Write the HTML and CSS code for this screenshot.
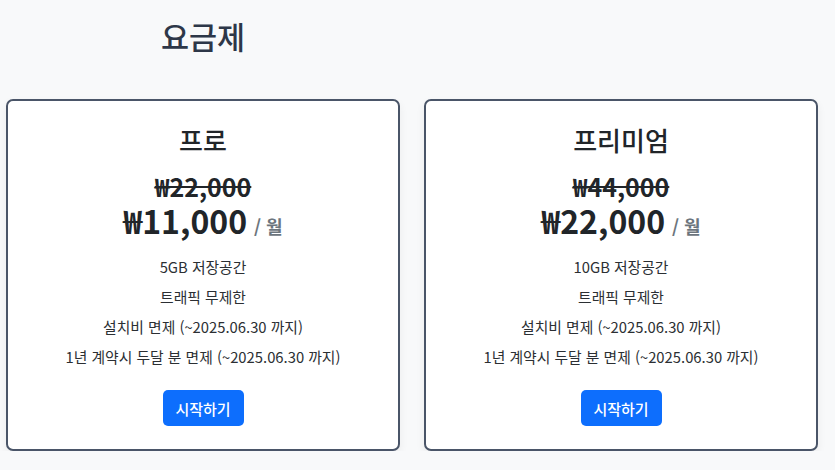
FILE: index.html
```html
<!DOCTYPE html>
<html lang="ko">
<head>
<meta charset="utf-8">
<link rel="stylesheet" href="styles.css">
</head>
<body>
<div class="page">
  <div class="head-row">
    <h1 class="title">요금제</h1>
  </div>
  <div class="plans">
    <div class="card">
      <h2 class="plan-name">프로</h2>
      <div class="old-price">₩22,000</div>
      <div class="price"><span class="amount">₩11,000</span><span class="per">/ 월</span></div>
      <ul class="features">
        <li>5GB 저장공간</li>
        <li>트래픽 무제한</li>
        <li>설치비 면제 (~2025.06.30 까지)</li>
        <li>1년 계약시 두달 분 면제 (~2025.06.30 까지)</li>
      </ul>
      <button class="btn">시작하기</button>
    </div>
    <div class="card">
      <h2 class="plan-name">프리미엄</h2>
      <div class="old-price">₩44,000</div>
      <div class="price"><span class="amount">₩22,000</span><span class="per">/ 월</span></div>
      <ul class="features">
        <li>10GB 저장공간</li>
        <li>트래픽 무제한</li>
        <li>설치비 면제 (~2025.06.30 까지)</li>
        <li>1년 계약시 두달 분 면제 (~2025.06.30 까지)</li>
      </ul>
      <button class="btn">시작하기</button>
    </div>
  </div>
</div>
</body>
</html>
```
FILE: styles.css
```css
html, body {
  margin: 0;
  padding: 0;
  background: #f8f9fa;
}
body {
  font-family: "Noto Sans CJK KR", "Noto Sans", sans-serif;
  color: #212529;
}
.page {
  padding: 0 0 0 6px;
}
.head-row {
  width: 394px;
  display: flex;
  justify-content: center;
}
.title {
  margin: 0;
  padding-top: 14px;
  font-size: 30.5px;
  font-weight: 500;
  line-height: 44px;
  color: #2d3748;
}
.plans {
  margin-top: 41px;
  display: grid;
  grid-template-columns: 394px 394px;
  column-gap: 24px;
}
.card {
  box-sizing: border-box;
  height: 352px;
  background: #fff;
  border: 2px solid #4a5568;
  border-radius: 7px;
  box-shadow: 0 4px 10px rgba(0,0,0,0.06);
  display: flex;
  flex-direction: column;
  align-items: center;
  padding-top: 21px;
}
.plan-name {
  margin: 0;
  font-size: 26px;
  font-weight: 500;
  line-height: 36px;
}
.old-price {
  margin-top: 13px;
  font-size: 25px;
  font-weight: 700;
  line-height: 30px;
  text-decoration: line-through;
  text-decoration-thickness: 2px;
}
.price {
  display: flex;
  align-items: baseline;
  line-height: 38px;
}
.amount {
  font-size: 32px;
  font-weight: 700;
}
.per {
  margin-left: 7px;
  font-size: 18px;
  font-weight: 600;
  color: #6c757d;
}
.features {
  list-style: none;
  margin: 7px 0 0;
  padding: 0;
  text-align: center;
}
.features li {
  font-size: 14.8px;
  line-height: 30px;
  color: #2b2f33;
}
.btn {
  margin-top: 18px;
  background: #0d6efd;
  color: #fff;
  border: 0;
  border-radius: 5px;
  font-family: inherit;
  font-size: 15px;
  font-weight: 500;
  width: 81px;
  height: 36px;
  padding: 0;
}
```
